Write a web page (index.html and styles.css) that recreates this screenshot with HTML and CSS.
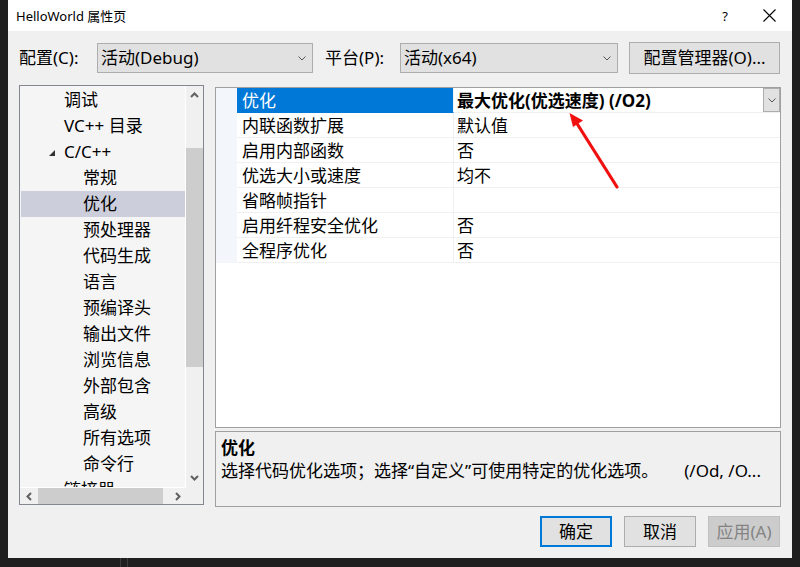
FILE: index.html
```html
<!DOCTYPE html>
<html lang="zh-CN">
<head>
<meta charset="utf-8">
<title>HelloWorld 属性页</title>
<link rel="stylesheet" href="styles.css">
</head>
<body>
<div class="screen">
  <div class="window">
    <div class="titlebar">
      <span class="title">HelloWorld 属性页</span>
      <span class="help">?</span>
      <svg class="close" width="13" height="13" viewBox="0 0 13 13"><path d="M0.5 0.5L12.5 12.5M12.5 0.5L0.5 12.5" stroke="#000" stroke-width="1.1" fill="none"/></svg>
    </div>

    <div class="toolbar">
      <span class="lbl lbl-config">配置(C):</span>
      <div class="combo combo-config">
        <span class="combo-text">活动(Debug)</span>
        <svg class="chev" width="8" height="5" viewBox="0 0 8 5"><path d="M0.5 0.5L4 4L7.5 0.5" stroke="#555" stroke-width="1" fill="none"/></svg>
      </div>
      <span class="lbl lbl-platform">平台(P):</span>
      <div class="combo combo-platform">
        <span class="combo-text">活动(x64)</span>
        <svg class="chev" width="8" height="5" viewBox="0 0 8 5"><path d="M0.5 0.5L4 4L7.5 0.5" stroke="#555" stroke-width="1" fill="none"/></svg>
      </div>
      <div class="btn btn-manager">配置管理器(O)...</div>
    </div>

    <div class="main">
      <div class="tree">
        <div class="tree-list">
          <div class="node l1">调试</div>
          <div class="node l1">VC++ 目录</div>
          <div class="node l1 expanded"><svg class="tri" width="6" height="6" viewBox="0 0 6 6"><path d="M0 6H6V0Z" fill="#333"/></svg>C/C++</div>
          <div class="node l2">常规</div>
          <div class="node l2 selected">优化</div>
          <div class="node l2">预处理器</div>
          <div class="node l2">代码生成</div>
          <div class="node l2">语言</div>
          <div class="node l2">预编译头</div>
          <div class="node l2">输出文件</div>
          <div class="node l2">浏览信息</div>
          <div class="node l2">外部包含</div>
          <div class="node l2">高级</div>
          <div class="node l2">所有选项</div>
          <div class="node l2">命令行</div>
          <div class="node l1">链接器</div>
        </div>
        <div class="vscroll">
          <svg class="sarrow" width="9" height="6" viewBox="0 0 9 6"><path d="M1 5L4.5 1.5L8 5" stroke="#606060" stroke-width="2" fill="none"/></svg>
          <div class="vtrack"><div class="vthumb"></div></div>
          <svg class="sarrow" width="9" height="6" viewBox="0 0 9 6"><path d="M1 1L4.5 4.5L8 1" stroke="#606060" stroke-width="2" fill="none"/></svg>
        </div>
        <div class="hscroll">
          <svg class="sarrow" width="6" height="9" viewBox="0 0 6 9"><path d="M5 1L1.5 4.5L5 8" stroke="#606060" stroke-width="2" fill="none"/></svg>
          <div class="htrack"><div class="hthumb"></div></div>
          <svg class="sarrow" width="6" height="9" viewBox="0 0 6 9"><path d="M1 1L4.5 4.5L1 8" stroke="#606060" stroke-width="2" fill="none"/></svg>
        </div>
        <div class="corner"></div>
      </div>

      <div class="right">
        <div class="grid">
          <div class="row">
            <div class="gutter"></div>
            <div class="name selected">优化</div>
            <div class="value bold">最大优化(优选速度) (/O2)
              <div class="dropbtn"><svg width="8" height="5" viewBox="0 0 8 5"><path d="M0.5 0.5L4 4L7.5 0.5" stroke="#555" stroke-width="1" fill="none"/></svg></div>
            </div>
          </div>
          <div class="row"><div class="gutter"></div><div class="name">内联函数扩展</div><div class="value">默认值</div></div>
          <div class="row"><div class="gutter"></div><div class="name">启用内部函数</div><div class="value">否</div></div>
          <div class="row"><div class="gutter"></div><div class="name">优选大小或速度</div><div class="value">均不</div></div>
          <div class="row"><div class="gutter"></div><div class="name">省略帧指针</div><div class="value"></div></div>
          <div class="row"><div class="gutter"></div><div class="name">启用纤程安全优化</div><div class="value">否</div></div>
          <div class="row"><div class="gutter"></div><div class="name">全程序优化</div><div class="value">否</div></div>
        </div>
        <div class="desc">
          <div class="desc-title">优化</div>
          <div class="desc-text">选择代码优化选项；选择“自定义”可使用特定的优化选项。<span class="desc-flags">(/Od, /O...</span></div>
        </div>
      </div>
    </div>

    <div class="footer">
      <div class="btn btn-ok">确定</div>
      <div class="btn">取消</div>
      <div class="btn btn-disabled">应用(A)</div>
    </div>

    <svg class="arrow" width="784" height="558" viewBox="0 0 784 558">
      <line x1="609" y1="187" x2="568" y2="122" stroke="#f01010" stroke-width="3.2" stroke-linecap="round"/>
      <polygon points="561.5,113 575,120.5 565,127" fill="#f01010"/>
    </svg>
  </div>
  <div class="taskbar"><span class="tick"></span><span class="tick"></span></div>
</div>
</body>
</html>
```

FILE: styles.css
```css
* { box-sizing: border-box; }

body {
  margin: 0;
  background: #1f1f1f;
  font-family: "Noto Sans", "Noto Sans CJK SC", sans-serif;
}

.screen {
  width: 800px;
  height: 567px;
  overflow: hidden;
}

.window {
  position: relative;
  margin-left: 8px;
  width: 784px;
  height: 558px;
  background: #f0f0f0;
  display: flex;
  flex-direction: column;
  font-size: 17px;
  color: #000;
}

/* title bar */
.titlebar {
  height: 31px;
  background: #fff;
  display: flex;
  align-items: center;
  padding-left: 8px;
  font-size: 13px;
}
.title { flex: 1; }
.help { margin-right: 35px; font-size: 13px; }
.close { margin-right: 16px; }

/* toolbar */
.toolbar {
  margin-top: 11px;
  height: 32px;
  padding-left: 11px;
  display: flex;
  align-items: center;
  line-height: 20px;
}
.lbl-config { width: 78px; }
.lbl-platform { width: 75px; margin-left: 12px; }
.combo {
  height: 30px;
  border: 1px solid #adadad;
  background: #e1e1e1;
  display: flex;
  align-items: center;
  padding-left: 3px;
  padding-right: 6px;
}
.combo-text { flex: 1; }
.combo-config { width: 216px; }
.combo-platform { width: 218px; }

.btn {
  height: 31px;
  width: 72px;
  border: 1px solid #adadad;
  background: #e1e1e1;
  display: flex;
  align-items: center;
  justify-content: center;
  line-height: 20px;
}
.btn-manager {
  margin-left: 11px;
  width: 151px;
  height: 32px;
  white-space: nowrap;
}

/* main area */
.main {
  margin-top: 11px;
  padding-left: 11px;
  display: flex;
  height: 422px;
}

.tree {
  width: 185px;
  height: 420px;
  border: 1px solid #828790;
  display: grid;
  grid-template-columns: 166px 17px;
  grid-template-rows: 401px 17px;
}
.tree-list {
  background: #f5f5f5;
  padding-top: 1px;
  padding-left: 1px;
  overflow: hidden;
  border-right: 1px solid #fff;
}
.node {
  height: 26px;
  line-height: 26px;
  white-space: nowrap;
  display: flex;
  align-items: center;
}
.l1 { padding-left: 43px; }
.l2 { padding-left: 62px; }
.node.selected { background: #cccedb; }
.expanded { padding-left: 28px; }
.tri { margin-right: 9px; margin-top: 2px; }

.vscroll {
  background: #f0f0f0;
  display: flex;
  flex-direction: column;
  align-items: center;
}
.vscroll .sarrow { margin: 6px 0; }
.vtrack {
  flex: 1;
  width: 100%;
  padding-top: 44px;
}
.vthumb {
  height: 219px;
  background: #cdcdcd;
}

.hscroll {
  background: #f0f0f0;
  display: flex;
  align-items: center;
  padding: 0 5px 0 6px;
  border-top: 1px solid #fff;
}
.htrack {
  flex: 1;
  height: 100%;
  padding-left: 6px;
  padding-right: 12px;
}
.hthumb {
  height: 100%;
  background: #cdcdcd;
}
.corner { background: #f0f0f0; }

/* right column */
.right {
  margin-left: 11px;
  width: 566px;
  padding-top: 2px;
  display: flex;
  flex-direction: column;
}
.grid {
  height: 341px;
  border: 1px solid #a0a0a0;
  background: #fff;
}
.row {
  display: flex;
  height: 25px;
  line-height: 26px;
}
.gutter {
  width: 21px;
  background: #f3f6fb;
}
.name {
  width: 217px;
  padding-left: 5px;
  border-right: 1px solid #f0f0f0;
  border-bottom: 1px solid #f0f0f0;
  white-space: nowrap;
}
.name.selected {
  background: #0078d7;
  color: #fff;
  border-bottom-color: #0078d7;
}
.value {
  flex: 1;
  padding-left: 3px;
  border-bottom: 1px solid #f0f0f0;
  display: flex;
  white-space: nowrap;
}
.bold { font-weight: bold; }
.dropbtn {
  margin-left: auto;
  width: 17px;
  height: 24px;
  border: 1px solid #adadad;
  background: #e1e1e1;
  display: flex;
  align-items: center;
  justify-content: center;
}

.desc {
  margin-top: 3px;
  height: 76px;
  border: 1px solid #a0a0a0;
  background: #f0f0f0;
  padding: 4px 5px;
  line-height: 23px;
}
.desc-title { font-weight: bold; }
.desc-text { white-space: nowrap; overflow: hidden; }
.desc-flags { margin-left: 26px; }

/* footer buttons */
.footer {
  margin-top: 9px;
  display: flex;
  justify-content: flex-end;
  gap: 12px;
  padding-right: 12px;
}
.btn-ok {
  border: 2px solid #0078d7;
}
.btn-disabled {
  background: #cccccc;
  border-color: #bfbfbf;
  color: #838383;
}

.arrow {
  position: absolute;
  left: 0;
  top: 0;
  pointer-events: none;
}

.taskbar {
  height: 9px;
  display: flex;
  padding-left: 120px;
  gap: 6px;
}
.tick {
  width: 1px;
  height: 9px;
  background: #3c3c3c;
}
```
